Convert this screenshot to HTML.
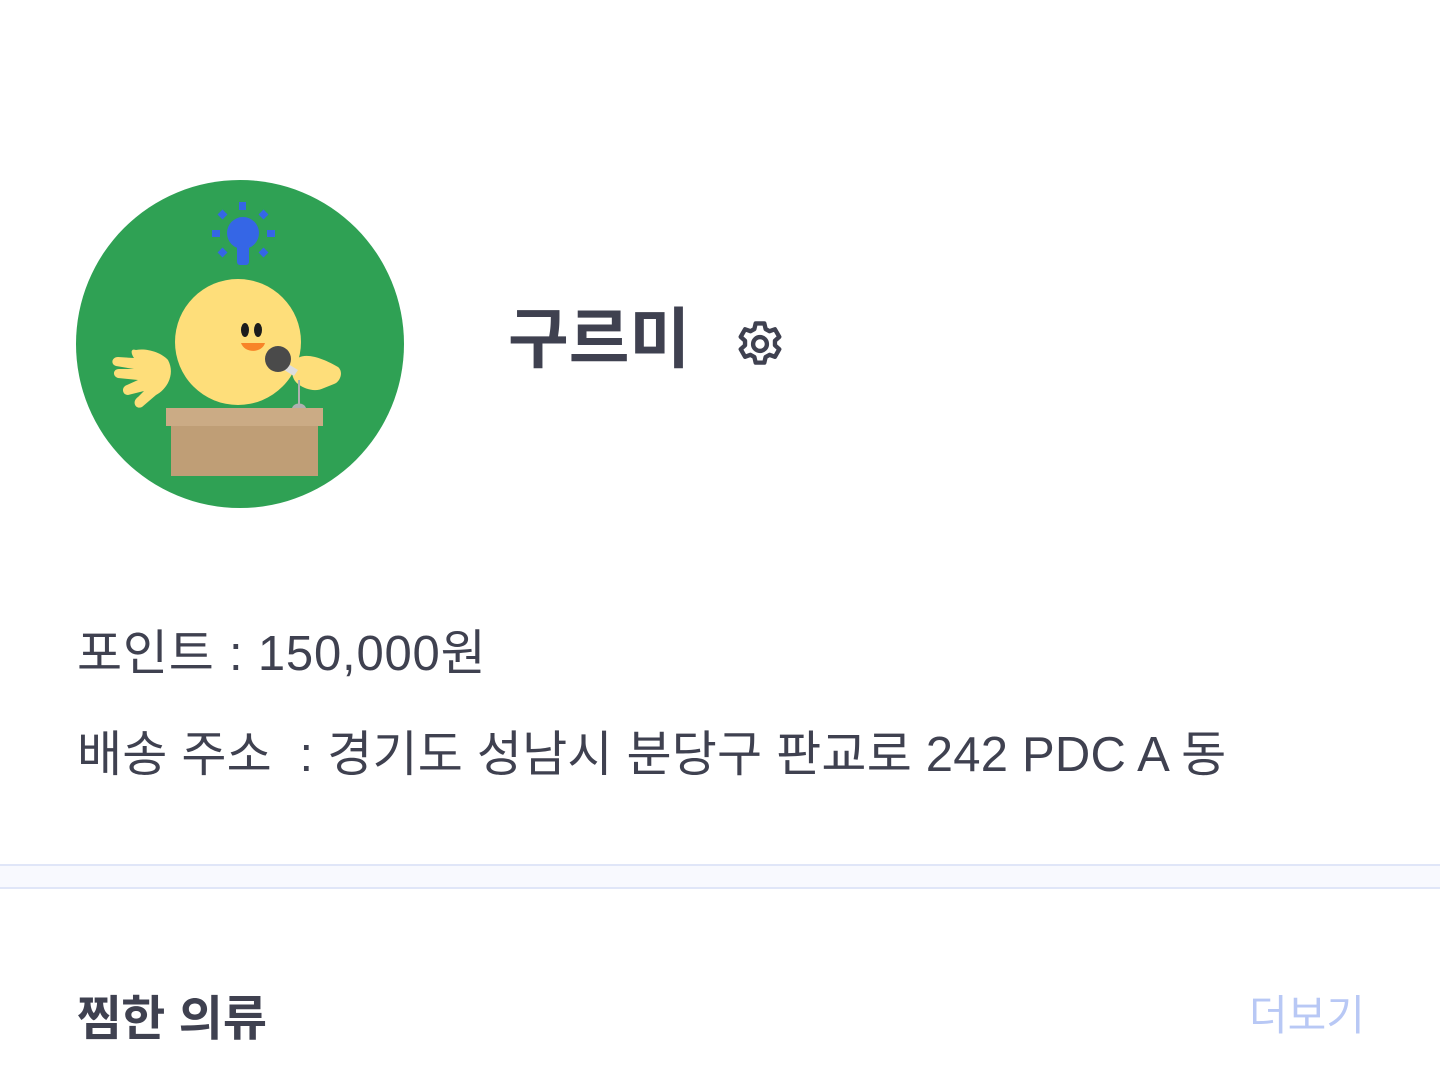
<!DOCTYPE html>
<html><head><meta charset="utf-8">
<style>
html,body{margin:0;padding:0;background:#fff;}
body{width:1440px;height:1080px;position:relative;overflow:hidden;font-family:"Liberation Sans","Noto Sans CJK KR",sans-serif;color:#3f4150;}
.t{position:absolute;white-space:nowrap;line-height:1;}
</style></head><body>
<svg style="position:absolute;left:76px;top:180px" width="328" height="328" viewBox="0 0 328 328">
<circle cx="164" cy="164" r="164" fill="#2fa154"/>
<g fill="#3566e6">
<circle cx="167" cy="53" r="16"/>
<rect x="161" y="55" width="12" height="30" rx="3"/>
<rect x="163" y="22" width="7" height="8"/>
<rect x="136" y="50" width="8" height="7"/>
<rect x="191" y="50" width="8" height="7"/>
<rect x="143" y="31" width="7" height="7" transform="rotate(45 146.5 34.5)"/>
<rect x="184" y="31" width="7" height="7" transform="rotate(45 187.5 34.5)"/>
<rect x="143" y="69" width="7" height="7" transform="rotate(45 146.5 72.5)"/>
<rect x="184" y="69" width="7" height="7" transform="rotate(45 187.5 72.5)"/>
</g>
<circle cx="162" cy="162" r="63" fill="#fede7a"/>
<path d="M60 170 C70 168 85 172 92 180 C100 195 90 210 80 215 L66 227 C60 230 55 222 62 217 L68 211 L52 215 C46 215 45 207 51 205 L62 200 L42 198 C36 196 37 189 43 189 L58 189 L40 186 C34 184 36 177 42 177 L58 178 C55 174 54 168 60 170Z" fill="#fede7a"/>
<path d="M222 178 C232 172 250 180 262 187 C268 192 264 202 258 204 L248 208 C240 212 230 210 222 204 C214 198 214 184 222 178Z" fill="#fede7a"/>
<ellipse cx="169" cy="150" rx="4" ry="7" fill="#1c1c1c"/>
<ellipse cx="182" cy="150" rx="4" ry="7" fill="#1c1c1c"/>
<path d="M165 163 L189 163 C186 173 169 174 165 163Z" fill="#f88428"/>
<rect x="222" y="200" width="2" height="27" fill="#b0b0b0"/>
<path d="M216 228 C218 222 228 222 230 228Z" fill="#b0b0b0"/>
<path d="M209 182 L222 190 L218 196 L205 188Z" fill="#ddd"/>
<circle cx="202" cy="179" r="13" fill="#4a4a4a"/>
<rect x="90" y="228" width="157" height="18" fill="#cbab85"/>
<rect x="95" y="246" width="147" height="50" fill="#bf9e76"/>
</svg>
<div class="t" style="left:508px;top:306px;font-size:66px;font-weight:bold;">구르미</div>
<svg style="position:absolute;left:734px;top:318px" width="52" height="52" viewBox="0 0 24 24"><path fill="none" stroke="#3f4150" stroke-width="2" stroke-linejoin="round" d="M10 2.5h4l.6 2.6 1.8 1 2.5-.9 2 3.5-2 1.8v2.1l2 1.8-2 3.5-2.5-.9-1.8 1-.6 2.6h-4l-.6-2.6-1.8-1-2.5.9-2-3.5 2-1.8v-2.1l-2-1.8 2-3.5 2.5.9 1.8-1z"/><circle cx="12" cy="12" r="3.2" fill="none" stroke="#3f4150" stroke-width="2"/></svg>
<div class="t" style="left:77px;top:630px;font-size:49px;letter-spacing:0.8px;">포인트 : 150,000원</div>
<div class="t" style="left:77px;top:731px;font-size:49px;letter-spacing:0.2px;">배송 주소 &nbsp;: 경기도 성남시 분당구 판교로 242 PDC A 동</div>
<div style="position:absolute;left:0;top:864px;width:1440px;height:21px;background:#f8f9fe;border-top:2px solid #e0e6f8;border-bottom:2px solid #e0e6f8;"></div>
<div class="t" style="left:77px;top:996px;font-size:48px;font-weight:bold;">찜한 의류</div>
<div class="t" style="left:1249px;top:995px;font-size:42px;color:#b8c8f5;">더보기</div>
</body></html>
